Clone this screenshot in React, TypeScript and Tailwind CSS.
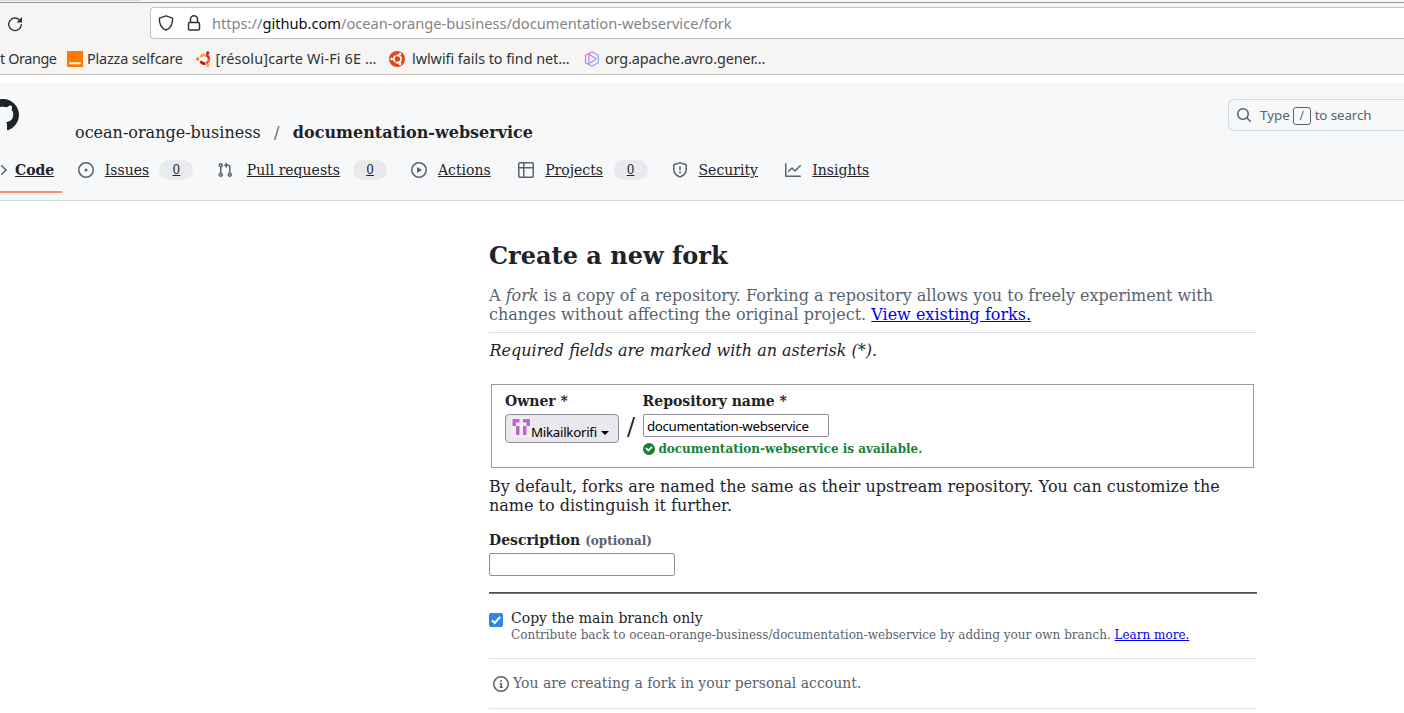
import React from 'react';

const paths = {
  github:
    'M8 0c4.42 0 8 3.58 8 8a8.013 8.013 0 0 1-5.45 7.59c-.4.08-.55-.17-.55-.38 0-.27.01-1.13.01-2.2 0-.75-.25-1.23-.54-1.48 1.78-.2 3.65-.88 3.65-3.95 0-.88-.31-1.59-.82-2.15.08-.2.36-1.02-.08-2.12 0 0-.67-.22-2.2.82-.64-.18-1.32-.27-2-.27-.68 0-1.36.09-2 .27-1.53-1.03-2.2-.82-2.2-.82-.44 1.1-.16 1.92-.08 2.12-.51.56-.82 1.28-.82 2.15 0 3.06 1.86 3.75 3.64 3.95-.23.2-.44.55-.51 1.07-.46.21-1.61.55-2.33-.66-.15-.24-.6-.83-1.23-.82-.67.01-.27.38.01.53.34.19.73.9.82 1.13.16.45.68 1.31 2.69.94 0 .67.01 1.3.01 1.49 0 .21-.15.45-.55.38A7.995 7.995 0 0 1 0 8c0-4.42 3.58-8 8-8Z',
  code:
    'm11.28 3.22 4.25 4.25a.75.75 0 0 1 0 1.06l-4.25 4.25a.749.749 0 0 1-1.275-.326.749.749 0 0 1 .215-.734L13.94 8l-3.72-3.72a.749.749 0 0 1 .326-1.275.749.749 0 0 1 .734.215Z',
  issue:
    'M8 9.5a1.5 1.5 0 1 0 0-3 1.5 1.5 0 0 0 0 3ZM8 0a8 8 0 1 1 0 16A8 8 0 0 1 8 0ZM1.5 8a6.5 6.5 0 1 0 13 0 6.5 6.5 0 0 0-13 0Z',
  pull:
    'M1.5 3.25a2.25 2.25 0 1 1 3 2.122v5.256a2.251 2.251 0 1 1-1.5 0V5.372A2.25 2.25 0 0 1 1.5 3.25Zm5.677-.177L9.573.677A.25.25 0 0 1 10 .854V2.5h1A2.5 2.5 0 0 1 13.5 5v5.628a2.251 2.251 0 1 1-1.5 0V5a1 1 0 0 0-1-1h-1v1.646a.25.25 0 0 1-.427.177L7.177 3.427a.25.25 0 0 1 0-.354ZM3.75 2.5a.75.75 0 1 0 0 1.5.75.75 0 0 0 0-1.5Zm0 9.5a.75.75 0 1 0 0 1.5.75.75 0 0 0 0-1.5Zm8.25.75a.75.75 0 1 0 1.5 0 .75.75 0 0 0-1.5 0Z',
  play:
    'M8 0a8 8 0 1 1 0 16A8 8 0 0 1 8 0ZM1.5 8a6.5 6.5 0 1 0 13 0 6.5 6.5 0 0 0-13 0Zm4.879-2.773 4.264 2.559a.25.25 0 0 1 0 .428l-4.264 2.559A.25.25 0 0 1 6 10.559V5.442a.25.25 0 0 1 .379-.215Z',
  table:
    'M0 1.75C0 .784.784 0 1.75 0h12.5C15.216 0 16 .784 16 1.75v12.5A1.75 1.75 0 0 1 14.25 16H1.75A1.75 1.75 0 0 1 0 14.25ZM6.5 6.5v8h7.75a.25.25 0 0 0 .25-.25V6.5Zm8-1.5V1.75a.25.25 0 0 0-.25-.25H6.5V5Zm-13 1.5v7.75c0 .138.112.25.25.25H5v-8ZM5 5V1.5H1.75a.25.25 0 0 0-.25.25V5Z',
  shield:
    'M7.467.133a1.748 1.748 0 0 1 1.066 0l5.25 1.68A1.75 1.75 0 0 1 15 3.48V7c0 1.566-.32 3.182-1.303 4.682-.983 1.498-2.585 2.813-5.032 3.855a1.697 1.697 0 0 1-1.33 0c-2.447-1.042-4.049-2.357-5.032-3.855C1.32 10.182 1 8.566 1 7V3.48a1.75 1.75 0 0 1 1.217-1.667Zm.61 1.429a.25.25 0 0 0-.153 0l-5.25 1.68a.25.25 0 0 0-.174.238V7c0 1.358.275 2.666 1.057 3.86.784 1.194 2.121 2.34 4.366 3.297a.196.196 0 0 0 .154 0c2.245-.956 3.582-2.104 4.366-3.298C13.225 9.666 13.5 8.36 13.5 7V3.48a.251.251 0 0 0-.174-.237l-5.25-1.68ZM8.75 4.75v3a.75.75 0 0 1-1.5 0v-3a.75.75 0 0 1 1.5 0ZM9 10.5a1 1 0 1 1-2 0 1 1 0 0 1 2 0Z',
  graph:
    'M1.5 1.75V13.5h13.75a.75.75 0 0 1 0 1.5H.75a.75.75 0 0 1-.75-.75V1.75a.75.75 0 0 1 1.5 0Zm14.28 2.53-5.25 5.25a.75.75 0 0 1-1.06 0L7 7.06 4.28 9.78a.751.751 0 0 1-1.042-.018.751.751 0 0 1-.018-1.042l3.25-3.25a.75.75 0 0 1 1.06 0L10 7.94l4.72-4.72a.751.751 0 0 1 1.042.018.751.751 0 0 1 .018 1.042Z',
  search:
    'M10.68 11.74a6 6 0 0 1-7.922-8.982 6 6 0 0 1 8.982 7.922l3.04 3.04a.749.749 0 0 1-.326 1.275.749.749 0 0 1-.734-.215ZM11.5 7a4.499 4.499 0 1 0-8.997 0A4.499 4.499 0 0 0 11.5 7Z',
  info:
    'M0 8a8 8 0 1 1 16 0A8 8 0 0 1 0 8Zm8-6.5a6.5 6.5 0 1 0 0 13 6.5 6.5 0 0 0 0-13ZM6.5 7.75A.75.75 0 0 1 7.25 7h1a.75.75 0 0 1 .75.75v2.75h.25a.75.75 0 0 1 0 1.5h-2a.75.75 0 0 1 0-1.5h.25v-2h-.25a.75.75 0 0 1-.75-.75ZM8 6a1 1 0 1 1 0-2 1 1 0 0 1 0 2Z',
};

function Icon({ name, className = 'size-4' }: { name: keyof typeof paths; className?: string }) {
  return (
    <svg viewBox="0 0 16 16" fill="currentColor" className={`shrink-0 ${className}`}>
      <path d={paths[name]} />
    </svg>
  );
}

function BrowserChrome() {
  return (
    <div className="h-[75px] border-b border-[#c6c3bd] bg-[#f6f5f3] font-['Noto_Sans',sans-serif]">
      <div className="flex h-[3px] flex-col">
        <div className="h-px w-[141px] bg-[#dddcdb]" />
        <div className="mt-px h-px bg-[#979694]" />
      </div>
      <div className="flex h-9 pt-1">
        <div className="flex w-[150px] items-center pl-[7px]">
          <svg viewBox="0 0 16 16" className="mt-px size-4 text-[#2e3436]" fill="none" stroke="currentColor" strokeWidth="1.4">
            <path d="M13 4.400A6.300 6.300 0 1 0 14.300 8.600" strokeLinecap="round" />
            <path d="M15 1v5.5H9.5Z" fill="currentColor" stroke="none" />
          </svg>
        </div>
        <div className="flex h-8 flex-1 items-center rounded-l-[4px] border border-r-0 border-[#c6c3bd] bg-white pl-[7px]">
          <svg viewBox="0 0 16 16" className="size-4 text-[#2e3436]" fill="none" stroke="currentColor" strokeWidth="1.4" strokeLinejoin="round">
            <path d="M8 .8 14.6 3.2c.3 4.4-1 9.2-6.6 12C2.400 12.400 1.100 7.600 1.400 3.200Z" />
          </svg>
          <svg viewBox="0 0 16 16" className="ml-3 size-4 text-[#2e3436]" fill="none" stroke="currentColor" strokeWidth="1.5">
            <rect x="2.500" y="7.500" width="11" height="7.500" rx="1.300" />
            <path d="M4.500 7.500V4.300a3.500 3.500 0 0 1 7 0v3.200" />
          </svg>
          <div className="ml-[10px] text-[14.67px] tracking-[-0.015px] whitespace-nowrap text-[#828486]">
            https://<span className="text-[#0c0c0d]">github.com</span>/ocean-orange-business/documentation-webservice/fork
          </div>
        </div>
      </div>
      <div className="flex h-[35px] items-center pt-[5px] text-[14.4px] whitespace-nowrap text-[#2e3436]">
        <div className="w-[67px] tracking-[-0.4px]">t Orange</div>
        <div className="flex w-[129px] items-center gap-1 tracking-[-0.17px]">
          <svg viewBox="0 0 16 16" className="size-4 shrink-0">
            <path fill="#ff7900" d="M0 0h16v16H0z" />
            <path fill="#fff" d="M2.300 11.300h11.400v2H2.300z" />
          </svg>
          Plazza selfcare
        </div>
        <div className="flex w-[193px] items-center gap-[3.5px] tracking-[0.15px]">
          <svg viewBox="0 0 16 16" className="size-4 shrink-0" fill="none" strokeWidth="2.600">
            <path d="M4.600 6.200A4.500 4.500 0 0 1 9 3.700" stroke="#f9a43f" />
            <path d="M9.800 3.900A4.500 4.500 0 0 1 13 8" stroke="#d7352a" />
            <path d="M13 8.300a4.500 4.500 0 0 1-3.200 4.100" stroke="#e8602c" />
            <path d="M9.300 12.600a4.500 4.500 0 0 1-4.700-2.500" stroke="#ba1532" />
            <circle cx="1.700" cy="7.900" r="1.700" fill="#f58220" />
            <circle cx="11.800" cy="1.900" r="1.700" fill="#c5163a" />
            <circle cx="11.800" cy="14.200" r="1.700" fill="#f9a43f" />
          </svg>
          [résolu]carte Wi-Fi 6E …
        </div>
        <div className="flex w-[195px] items-center gap-[7px] tracking-[-0.04px]">
          <svg viewBox="0 0 16 16" className="size-4 shrink-0" fill="none">
            <circle cx="8" cy="8" r="8" fill="#dd4814" />
            <circle cx="8.400" cy="8" r="3.700" stroke="#fff" strokeWidth="1.800" strokeDasharray="6.950 .8" strokeDashoffset="-.4" />
            <circle cx="2.600" cy="8" r="1.300" fill="#fff" />
            <circle cx="11" cy="3.100" r="1.300" fill="#fff" />
            <circle cx="11" cy="12.900" r="1.300" fill="#fff" />
          </svg>
          lwlwifi fails to find net…
        </div>
        <div className="flex items-center gap-[5px] tracking-[-0.1px]">
          <svg viewBox="0 0 16 16" className="size-4 shrink-0" fill="none" stroke="url(#avro)" strokeWidth="1.200" strokeLinejoin="round">
            <defs>
              <linearGradient id="avro" x1="0" y1="0" x2="1" y2="1">
                <stop offset=".2" stopColor="#dc6cf2" />
                <stop offset=".8" stopColor="#7da6ff" />
              </linearGradient>
            </defs>
            <path d="M8 .8 14.300 4.300v7.400L8 15.200 1.500 11.700V4.300ZM4.800 3v9.800L12.400 8Z" />
          </svg>
          org.apache.avro.gener…
        </div>
      </div>
    </div>
  );
}

function Tab({ icon, label, count, className }: { icon: keyof typeof paths; label: string; count?: number; className: string }) {
  return (
    <a className={`flex shrink-0 items-center ${className}`}>
      <Icon name={icon} className="size-4 text-[#59636e]" />
      <span className="underline">{label}</span>
      {count !== undefined && (
        <span className="-ml-[0.6px] flex h-5 w-[34px] items-center justify-center rounded-full bg-[#e8eaee] text-xs underline">{count}</span>
      )}
    </a>
  );
}

function RepoHeader() {
  return (
    <header className="mt-2 h-[118px] overflow-hidden border-b border-[#d1d9e0] bg-[#f6f8fa]">
      <div className="flex h-[67px] items-start">
        <div className="-ml-[13px] pt-4">
          <Icon name="github" className="size-8" />
        </div>
        <div className="mt-10 ml-14 flex text-base leading-[19px] whitespace-nowrap">
          <span>ocean-orange-business</span>
          <span className="mx-[13.4px] text-[#59636e]">/</span>
          <b>documentation-webservice</b>
        </div>
        <div className="mt-4 ml-auto flex h-8 w-[176px] items-center rounded-l-md border border-r-0 border-[#d1d9e0] pl-[7px] font-['Noto_Sans',sans-serif] text-[13.33px] whitespace-nowrap text-[#59636e]">
          <Icon name="search" />
          <span className="mt-px ml-2">Type</span>
          <span className="mt-px mr-1 ml-[3px] flex h-[18px] w-[18px] items-center justify-center rounded-[3px] border border-[#59636e] text-xs">/</span>
          <span className="mt-px tracking-[-0.1px]">to search</span>
        </div>
      </div>
      <nav className="flex h-[43px] text-sm whitespace-nowrap">
        <div className="flex h-[43px] w-[62px] shrink-0 items-center border-b-2 border-[#fd8c73] pb-[1px]">
          <Icon name="code" className="-ml-[9px] size-4 text-[#59636e]" />
          <b className="ml-2 underline">Code</b>
        </div>
        <div className="ml-4 flex h-10 items-center">
          <Tab icon="issue" label="Issues" count={0} className="w-[139px] gap-[10.8px]" />
          <Tab icon="pull" label="Pull requests" count={0} className="w-[194px] gap-[13.8px]" />
          <Tab icon="play" label="Actions" className="w-[107px] gap-[11px]" />
          <Tab icon="table" label="Projects" count={0} className="w-[154px] gap-[11.2px]" />
          <Tab icon="shield" label="Security" className="w-[113px] gap-[10.5px]" />
          <Tab icon="graph" label="Insights" className="gap-[11.3px]" />
        </div>
      </nav>
    </header>
  );
}

function ForkForm() {
  return (
    <main className="ml-[489px] flex w-[768px] flex-col pt-[41px] whitespace-nowrap">
      <h2 className="text-2xl leading-[28px] font-bold">Create a new fork</h2>
      <p className="mt-4 text-base leading-[19px] text-[#59636e]">
        A <i>fork</i> is a copy of a repository. Forking a repository allows you to freely experiment with
        <br />
        changes without affecting the original project. <a className="text-[#0000ee] underline">View existing forks.</a>
      </p>
      <div className="mt-2 h-px bg-[#d9dfe5]" />
      <p className="mt-2 pl-[0.5px] text-base leading-[19px] italic">Required fields are marked with an asterisk (*).</p>
      <div className="mt-6 ml-[2px] flex h-[84px] w-[763px] border border-[#9b9b9b] pt-2 pl-[13px]">
        <div className="w-[114px]">
          <div className="text-sm leading-[17px] font-bold">Owner *</div>
          <button className="mt-1 flex h-[29px] w-[114px] items-center rounded-[4px] border border-[#8f8f9d] bg-[#e9e9ed] pl-[5px] font-['Noto_Sans',sans-serif] text-[13.33px] text-black">
            <svg viewBox="0 0 20 20" className="-mt-[4px] size-5 shrink-0">
              <path fill="#f0f0f0" d="M0 0h20v20H0z" />
              <path fill="#bf64cc" d="M1.500 2h7v3.500H5v3.500H1.500zM5 9h3.500v9H5zM12 2h7v7h-3.500V5.500H12zM12 9h3.500v9H12z" />
            </svg>
            <span className="mt-[7px] leading-[18px] tracking-[-0.28px]">Mikailkorifi</span>
            <span className="mt-2 ml-1 border-x-4 border-t-4 border-x-transparent border-t-black" />
          </button>
        </div>
        <div className="mt-5 w-6 text-center text-2xl leading-[28px]">/</div>
        <div>
          <div className="-ml-[0.4px] text-sm leading-[17px] font-bold">Repository name *</div>
          <div className="mt-1 flex h-[23px] w-[186px] items-center rounded-[2px] border border-[#8f8f9d] bg-white pt-[2px] pl-[3px] font-['Noto_Sans',sans-serif] text-[13.33px] leading-[19px] tracking-[-0.35px] text-black">
            documentation-webservice
          </div>
          <div className="mt-[5px] flex items-center gap-[3.4px] text-xs leading-[14px] font-bold text-[#1a7f37]">
            <svg viewBox="0 0 12 12" fill="currentColor" className="size-3">
              <path d="M6 0a6 6 0 1 1 0 12A6 6 0 0 1 6 0Zm-.705 8.737L9.630 4.403 8.392 3.166 5.295 6.263l-1.700-1.702L2.356 5.800l2.938 2.938Z" />
            </svg>
            documentation-webservice is available.
          </div>
        </div>
      </div>
      <p className="mt-[9px] text-base leading-[19px]">
        By default, forks are named the same as their upstream repository. You can customize the
        <br />
        name to distinguish it further.
      </p>
      <div className="mt-4 text-sm leading-[19px] font-bold">
        Description <span className="text-xs text-[#59636e]">(optional)</span>
      </div>
      <div className="mt-[3px] h-[23px] w-[186px] rounded-[2px] border border-[#8f8f9d] bg-white" />
      <div className="mt-4 h-[2px] border-t border-[#4f5052] bg-[#77787b]" />
      <div className="mt-4 flex gap-2">
        <svg viewBox="0 0 14 14" className="mt-[3px] size-[14px]">
          <rect width="14" height="14" rx="2" fill="#3584e4" />
          <path d="m3 7.300 2.700 2.700L11.200 3.900" fill="none" stroke="#fff" strokeWidth="2" />
        </svg>
        <div>
          <div className="text-sm leading-[17px]">Copy the main branch only</div>
          <div className="pt-px text-xs leading-[14px] text-[#59636e]">
            Contribute back to ocean-orange-business/documentation-webservice by adding your own branch.{' '}
            <a className="text-[#0000ee] underline">Learn more.</a>
          </div>
        </div>
      </div>
      <div className="mt-4 h-px bg-[#dfe1e4]" />
      <div className="flex h-[49px] items-center gap-1 pb-[2px] pl-1 text-sm text-[#59636e]">
        <Icon name="info" className="mt-[2px] size-4" />
        You are creating a fork in your personal account.
      </div>
      <div className="h-px bg-[#dfe1e4]" />
    </main>
  );
}

export default function App() {
  return (
    <div className="h-[713px] w-[1404px] overflow-hidden bg-white font-['DejaVu_Serif',serif] text-[#1f2328]">
      <BrowserChrome />
      <RepoHeader />
      <ForkForm />
    </div>
  );
}
